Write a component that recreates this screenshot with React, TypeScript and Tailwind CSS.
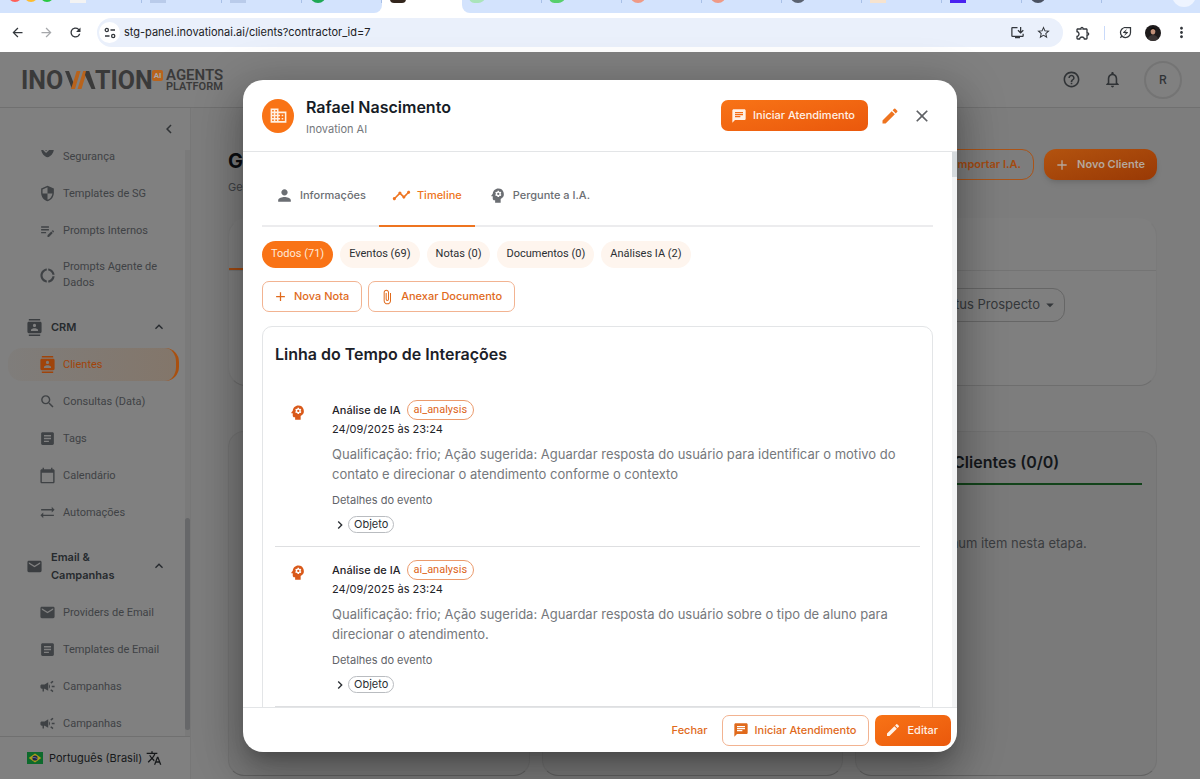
import type { ReactNode } from "react";
import type { IconType } from "react-icons";
import {
  MdAdd,
  MdArrowBack,
  MdArrowDropDown,
  MdArrowForward,
  MdArticle,
  MdAttachFile,
  MdBusiness,
  MdCalendarToday,
  MdCampaign,
  MdChat,
  MdChevronLeft,
  MdChevronRight,
  MdClose,
  MdContacts,
  MdDonutLarge,
  MdEdit,
  MdEditNote,
  MdEmail,
  MdExpandLess,
  MdHelpOutline,
  MdInstallDesktop,
  MdMoreVert,
  MdNotificationsNone,
  MdOutlineEnergySavingsLeaf,
  MdOutlineExtension,
  MdPerson,
  MdPsychology,
  MdRefresh,
  MdSearch,
  MdSecurity,
  MdStarBorder,
  MdSyncAlt,
  MdTimeline,
  MdTranslate,
  MdVerifiedUser,
} from "react-icons/md";

const tabs = [
  { icon: "bg-[#f3f3f3]", shape: "bg-[#d3e3fd]" },
  { icon: "bg-[#b9cbea]", shape: "bg-[#d3e3fd]" },
  { icon: "bg-[#b9cbea]", shape: "bg-[#d3e3fd]" },
  { icon: "bg-[#1fa855] rounded-full", shape: "bg-[#d3e3fd] rounded-br-lg" },
  { icon: "bg-[#33261d] rounded-sm", shape: "bg-white", active: true },
  { icon: "bg-[#a9e4ba] -skew-x-12 rounded-md", shape: "bg-[#d3e3fd] rounded-bl-lg" },
  { icon: "bg-[#57cf6c] -skew-x-12 rounded-md", shape: "bg-[#d3e3fd]" },
  { icon: "bg-[#ef9a86] rounded-full", shape: "bg-[#d3e3fd]" },
  { icon: "bg-[#ef9a86] rounded-full", shape: "bg-[#d3e3fd]" },
  { icon: "bg-[#5a6270] rounded-full", shape: "bg-[#d3e3fd]" },
  { icon: "bg-[#f6e3cf]", shape: "bg-[#d3e3fd]" },
  { icon: "bg-[#4a22f0]", shape: "bg-[#d3e3fd]" },
  { icon: "bg-[#4a5262] rounded-full", shape: "bg-[#d3e3fd]" },
];

const filters = [
  "Todos (71)",
  "Eventos (69)",
  "Notas (0)",
  "Documentos (0)",
  "Análises IA (2)",
];

const events = [
  {
    date: "24/09/2025 às 23:24",
    text: "Qualificação: frio; Ação sugerida: Aguardar resposta do usuário para identificar o motivo do contato e direcionar o atendimento conforme o contexto",
  },
  {
    date: "24/09/2025 às 23:24",
    text: "Qualificação: frio; Ação sugerida: Aguardar resposta do usuário sobre o tipo de aluno para direcionar o atendimento.",
  },
];

function BrowserBar() {
  return (
    <div className="shrink-0 bg-white">
      <div className="flex h-[13px] items-end overflow-hidden bg-white">
        <div className="flex h-9 w-[62px] shrink-0 items-center gap-0.5 bg-[#d3e3fd] pl-2">
          <span className="size-3.5 rounded-full bg-[#ff5f57]" />
          <span className="size-3.5 rounded-full bg-[#febc2e]" />
          <span className="size-3.5 rounded-full bg-[#28c840]" />
        </div>
        {tabs.map((tab, i) => (
          <div key={i} className={`flex h-9 w-20 items-center pl-2 ${tab.shape}`}>
            <span className={`size-4 ${tab.icon}`} />
            {!tab.active && <span className="ml-auto h-4 w-px bg-[#a8c0e8]" />}
          </div>
        ))}
        <div className="flex h-9 flex-1 items-center justify-end bg-[#d3e3fd] pr-1">
          <span className="size-6 rounded-full bg-[#eef4ff]" />
        </div>
      </div>
      <div className="flex h-[39px] items-center px-2.5 text-[#33373c]">
        <button aria-label="Voltar" className="mr-3.5">
          <MdArrowBack size={15} />
        </button>
        <button aria-label="Avançar" className="mr-3.5 text-[#a6a8ab]">
          <MdArrowForward size={15} />
        </button>
        <button aria-label="Recarregar" className="mr-3.5">
          <MdRefresh size={15} />
        </button>
        <div className="flex h-[29px] flex-1 items-center rounded-full bg-[#eaf0fb] pr-3 pl-0.5">
          <span className="flex size-[21px] items-center justify-center rounded-full bg-white">
            <svg width="12" height="12" viewBox="0 0 12 12" fill="none" stroke="currentColor" strokeWidth="1.3">
              <circle cx="2.8" cy="3" r="1.6" />
              <path d="M6.500 3h4.500M1 9h4.500" />
              <circle cx="9.2" cy="9" r="1.6" />
            </svg>
          </span>
          <input
            aria-label="Endereço"
            className="mx-1 flex-1 bg-transparent text-[11px] text-[#202124] outline-none"
            defaultValue="stg-panel.inovationai.ai/clients?contractor_id=7"
          />
          <MdInstallDesktop size={15} className="mr-[11px]" />
          <MdStarBorder size={15} />
        </div>
        <MdOutlineExtension size={16} className="ml-3" />
        <span className="mx-[13px] h-3.5 w-px bg-[#c9dafa]" />
        <MdOutlineEnergySavingsLeaf size={15} />
        <svg width="16" height="16" viewBox="0 0 16 16" className="mx-3">
          <circle cx="8" cy="8" r="8" fill="#1d1a1b" />
          <path d="M3 14q1-4 5-4t5 4a8 8 0 0 1-10 0z" fill="#3a3434" />
          <ellipse cx="8" cy="6.5" rx="2.3" ry="3" fill="#c08f78" />
          <path d="M5.500 5.500q0-3 2.500-3t2.500 3q-1-1.500-2.500-1.500t-2.500 1.500z" fill="#0c0a0a" />
        </svg>
        <MdMoreVert size={17} />
      </div>
    </div>
  );
}

function Logo() {
  return (
    <a href="/" className="flex items-center text-[#3a3a3a] [font-family:Roboto,sans-serif]">
      <svg width="130" height="30" viewBox="0 0 130 30" fill="#3a3a3a">
        <text x="-1" y="24" fontSize="25" fontWeight="700">
          INO
        </text>
        <path d="M43 6h4l5 13-2 5z" />
        <path d="M58.500 6h-3.800L49 24h4z" fill="#b8631c" />
        <path d="M65 6h-3.800L55.500 24h4z" fill="#b8631c" />
        <path d="M64 6h3.200L73.500 24h-4L63 10z" />
        <text x="73" y="24" fontSize="25" fontWeight="700">
          TION
        </text>
      </svg>
      <span className="mb-2 flex size-[11px] items-center justify-center rounded-[2px] bg-[#b8631c] text-[8px] font-bold text-[#a8a8a8]">
        AI
      </span>
      <span className="ml-[3px] flex flex-col pt-0.5 font-semibold">
        <span className="text-[15px] leading-[13px]">AGENTS</span>
        <span className="text-[11px] leading-2.5">PLATFORM</span>
      </span>
    </a>
  );
}

function Header() {
  return (
    <header className="flex h-14 shrink-0 items-center justify-between border-b border-[#707070] pr-[18px] pl-[22px]">
      <Logo />
      <div className="flex items-center text-[#303336]">
        <button aria-label="Ajuda">
          <MdHelpOutline size={19} />
        </button>
        <button aria-label="Notificações" className="ml-[22px]">
          <MdNotificationsNone size={19} />
        </button>
        <button className="ml-[22px] flex size-[38px] items-center justify-center rounded-full border-2 border-[#747474] text-[12px] font-medium">
          R
        </button>
      </div>
    </header>
  );
}

function NavItem({ icon: Icon, label, active }: { icon: IconType; label: ReactNode; active?: boolean }) {
  return (
    <a
      href="#"
      className={
        active
          ? "flex items-center gap-[7px] rounded-[14px] border-r-3 border-[#a9500f] bg-linear-to-r from-[#7f7d7b] to-[#83766a] py-2 pr-2 pl-[31px] text-[#a0440a]"
          : "flex items-center gap-[7px] py-2 pr-2 pl-[31px] text-[#3f4245]"
      }
    >
      <Icon size={17} className="shrink-0" />
      <span>{label}</span>
    </a>
  );
}

function NavGroup({ icon: Icon, label }: { icon: IconType; label: string }) {
  return (
    <button className="mt-[7px] flex items-center gap-2 py-2 pr-3 pl-[18px] text-left text-[11px] leading-[18px] font-semibold text-[#262a2e] [font-family:Inter,sans-serif]">
      <Icon size={17} className="shrink-0 text-[#3a3d40]" />
      <span className="w-20">{label}</span>
      <MdExpandLess size={16} className="ml-auto" />
    </button>
  );
}

function Sidebar() {
  return (
    <aside className="flex w-[191px] shrink-0 flex-col border-r border-[#777777]">
      <div className="flex h-[42px] shrink-0 items-center justify-end pr-3">
        <button aria-label="Recolher menu" className="text-[#303336]">
          <MdChevronLeft size={18} />
        </button>
      </div>
      <div className="flex min-h-0 flex-1">
        <nav className="flex flex-1 flex-col overflow-hidden pl-2">
          {/* list is scrolled, the first row shows only its lower half */}
          <div className="-mt-[25px] mr-1.5 flex flex-col gap-1 text-[11px] leading-4 [font-family:Roboto,sans-serif]">
            <NavItem icon={MdVerifiedUser} label={<span className="block pt-4">Segurança</span>} />
            <NavItem icon={MdSecurity} label="Templates de SG" />
            <NavItem icon={MdEditNote} label="Prompts Internos" />
            <NavItem icon={MdDonutLarge} label="Prompts Agente de Dados" />
            <NavGroup icon={MdContacts} label="CRM" />
            <NavItem icon={MdContacts} label="Clientes" active />
            <NavItem icon={MdSearch} label="Consultas (Data)" />
            <NavItem icon={MdArticle} label="Tags" />
            <NavItem icon={MdCalendarToday} label="Calendário" />
            <NavItem icon={MdSyncAlt} label="Automações" />
            <NavGroup icon={MdEmail} label="Email & Campanhas" />
            <NavItem icon={MdEmail} label="Providers de Email" />
            <NavItem icon={MdArticle} label="Templates de Email" />
            <NavItem icon={MdCampaign} label="Campanhas" />
            <NavItem icon={MdCampaign} label="Campanhas" />
          </div>
        </nav>
        <div className="flex w-[5px] flex-col justify-end bg-[#7a7a7a] pb-1.5">
          <div className="h-[212px] rounded-full bg-[#666769]" />
        </div>
      </div>
      <div className="flex h-[43px] shrink-0 items-center border-t border-[#707070] pl-[27px] text-[11px] text-[#16181a]">
        <svg width="16" height="12" viewBox="0 0 16 12" className="mr-1.5">
          <path d="M0 0h16v12H0z" fill="#0d6a2c" />
          <path d="M8 1.500 14.300 6 8 10.500 1.700 6z" fill="#a99a1c" />
          <circle cx="8" cy="6" r="2.600" fill="#1b2450" />
          <path d="M5.500 5.500q2.500-.6 5 1.200" stroke="#8f96a3" strokeWidth=".6" fill="none" />
        </svg>
        Português (Brasil)
        <MdTranslate size={16} className="ml-1" />
      </div>
    </aside>
  );
}

function StageColumn({ children }: { children?: ReactNode }) {
  return (
    <section className="flex-1 rounded-2xl border border-[#747474] border-b-[#626262] bg-[#7a7a7a] px-3.5">
      {children}
    </section>
  );
}

function ClientsPage() {
  return (
    <main className="flex flex-1 flex-col bg-[#7d7d7d] pr-[43px] pb-[3px] pl-[37px]">
      <div className="mt-[41px] flex items-start justify-between">
        <div>
          <h1 className="text-[20px] leading-6 font-bold text-[#0b0d10]">Gestão de Clientes</h1>
          <p className="mt-1.5 text-[11px] leading-4 text-[#3f4245]">Gerencie</p>
        </div>
        <div className="flex gap-2.5">
          <button className="h-[31px] rounded-xl border border-[#ab5417] px-3 text-[11px] font-semibold text-[#a34a10]">
            Importar I.A.
          </button>
          <button className="flex h-[31px] items-center gap-[7px] rounded-xl bg-linear-to-br from-[#b3530f] to-[#993905] pr-3 pl-2.5 text-[11px] font-semibold text-[#b5a79c] shadow-md">
            <MdAdd size={16} />
            Novo Cliente
          </button>
        </div>
      </div>
      <section className="mt-[23px] flex h-[168px] flex-col rounded-[18px] border border-[#7a7a7a] border-t-transparent border-b-[#6e6e6e] bg-[#7f7f7f]">
        <div className="flex h-[52px] items-end border-b border-[#747474]">
          <span className="h-0.5 w-24 bg-[#a34a10]" />
        </div>
        <button className="mt-[17px] mr-[91px] flex h-[34px] items-center gap-px self-end rounded-xl border border-[#666666] pr-[5px] pl-4 text-[13px] text-[#34373a]">
          Status Prospecto
          <MdArrowDropDown size={18} />
        </button>
      </section>
      <div className="mt-[45px] flex flex-1 gap-3">
        <StageColumn />
        <StageColumn />
        <StageColumn>
          <h2 className="border-b-2 border-[#12431a] pt-5 pb-[11px] text-center text-[16px] leading-5 font-semibold text-[#14171a]">
            Clientes (0/0)
          </h2>
          <p className="pt-12 text-center text-[13px] leading-5 text-[#3a3d40]">Nenhum item nesta etapa.</p>
        </StageColumn>
      </div>
    </main>
  );
}

function TimelineEvent({ date, text }: { date: string; text: string }) {
  return (
    <li className="flex border-b border-[#dedfe1] py-[13px]">
      <MdPsychology size={19} className="mt-[3px] mr-[25px] ml-[13px] shrink-0 text-[#d9591a]" />
      <div>
        <div className="flex items-center gap-1.5 text-[11px] leading-5 font-medium text-[#1f2328]">
          Análise de IA
          <span className="flex h-5 items-center rounded-full border border-[#eb9a6c] px-1.5 font-normal text-[#dd6420] [font-family:Roboto,sans-serif]">
            ai_analysis
          </span>
        </div>
        <time className="block text-[11px] leading-[18px] text-[#1f2328]">{date}</time>
        <p className="mt-1.5 text-[13px] leading-5 text-[#75787c]">{text}</p>
        <p className="mt-2 text-[11px] leading-4 text-[#5f6368]">Detalhes do evento</p>
        <button className="mt-2 flex items-center text-[11px] text-[#2b2f33]">
          <MdChevronRight size={16} />
          <span className="flex h-[17px] items-center rounded-full border border-[#b9bcc0] px-[5px]">Objeto</span>
        </button>
      </div>
    </li>
  );
}

function ClientDialog() {
  const outlined =
    "flex h-[31px] items-center gap-1.5 rounded-[7px] border border-[#f2b391] pr-3 pl-2.5 text-[11px] font-medium text-[#e06a1c]";
  const filled =
    "flex h-[31px] items-center gap-1.5 rounded-[7px] bg-linear-to-br from-[#f87316] to-[#ea580c] pr-[13px] pl-2.5 text-[11px] font-medium text-[#fff1e6]";

  return (
    <div
      role="dialog"
      aria-label="Rafael Nascimento"
      className="flex h-full w-full max-w-[714px] flex-col overflow-hidden rounded-[20px] bg-white shadow-[0_11px_15px_-7px_rgba(0,0,0,0.2),0_24px_38px_3px_rgba(0,0,0,0.14),0_9px_46px_8px_rgba(0,0,0,0.2)]"
    >
      <div className="flex h-[72px] shrink-0 items-center border-b border-[#e3e5e7] pr-[25px] pl-[19px]">
        <span className="flex h-[34px] w-8 items-center justify-center rounded-[50%] bg-[#f97316] text-[#fff0e2]">
          <MdBusiness size={19} />
        </span>
        <div className="ml-3 pt-0.5">
          <h2 className="text-[16px] leading-5 font-semibold text-[#161c26]">Rafael Nascimento</h2>
          <p className="mt-1 text-[11px] leading-4 text-[#75787c]">Inovation AI</p>
        </div>
        <button className={`${filled} ml-auto`}>
          <MdChat size={16} />
          Iniciar Atendimento
        </button>
        <button aria-label="Editar cliente" className="ml-3 text-[#ee7420]">
          <MdEdit size={20} />
        </button>
        <button aria-label="Fechar janela" className="ml-3 text-[#5f6165]">
          <MdClose size={20} />
        </button>
      </div>

      <div className="flex min-h-0 flex-1">
        <div className="flex-1 overflow-hidden px-[19px] pt-3.5">
          <div role="tablist" className="flex h-[61px] border-b-2 border-[#ececee] text-[11px] font-medium text-[#6b6e73]">
            <button role="tab" className="flex items-center gap-1.5 px-[13px]">
              <MdPerson size={19} />
              Informações
            </button>
            <button
              role="tab"
              aria-selected="true"
              className="-mb-0.5 flex items-center gap-1.5 border-b-2 border-[#ee7420] px-[13px] text-[#ee7420]"
            >
              <MdTimeline size={19} />
              Timeline
            </button>
            <button role="tab" className="flex items-center gap-1.5 px-[13px]">
              <MdPsychology size={19} />
              Pergunte a I.A.
            </button>
          </div>

          <div className="mt-3.5 flex gap-[7px] text-[11px] [font-family:Roboto,sans-serif]">
            {filters.map((label, i) => (
              <button
                key={label}
                className={
                  i === 0
                    ? "h-[27px] rounded-full bg-[#f97316] px-[9px] text-[#ffe9d8]"
                    : "h-[27px] rounded-full bg-[#fef5ee] px-[9px] text-[#2b2f33]"
                }
              >
                {label}
              </button>
            ))}
          </div>

          <div className="mt-[13px] flex gap-1.5">
            <button className={outlined}>
              <MdAdd size={15} />
              Nova Nota
            </button>
            <button className={outlined}>
              <MdAttachFile size={16} />
              Anexar Documento
            </button>
          </div>

          <section className="mt-3.5 rounded-[10px] border border-[#e3e5e7] px-3 pt-[17px]">
            <h3 className="text-[16px] leading-5 font-semibold text-[#1b2028]">Linha do Tempo de Interações</h3>
            <ul className="pt-[23px]">
              {events.map((event) => (
                <TimelineEvent key={event.text} {...event} />
              ))}
            </ul>
            <div className="h-20" />
          </section>
        </div>
        <div className="w-[5px] bg-[#f3f4f5]">
          <div className="h-[25px] bg-[#d5dadd]" />
        </div>
      </div>

      <div className="flex h-[45px] shrink-0 items-center justify-end gap-1.5 border-t border-[#e3e5e7] pr-1.5">
        <button className="mr-2 text-[11px] font-medium text-[#e06a1c]">Fechar</button>
        <button className={outlined}>
          <MdChat size={16} />
          Iniciar Atendimento
        </button>
        <button className={filled}>
          <MdEdit size={16} />
          Editar
        </button>
      </div>
    </div>
  );
}

function App() {
  return (
    <div className="flex h-screen flex-col overflow-hidden [font-family:Inter,sans-serif]">
      <BrowserBar />
      <div className="relative flex min-h-0 flex-1 flex-col bg-[#808080]">
        <Header />
        <div className="flex min-h-0 flex-1">
          <Sidebar />
          <ClientsPage />
        </div>
        <div className="absolute inset-0 flex items-center justify-center pt-7 pb-[27px]">
          <ClientDialog />
        </div>
      </div>
    </div>
  );
}

export default App;
